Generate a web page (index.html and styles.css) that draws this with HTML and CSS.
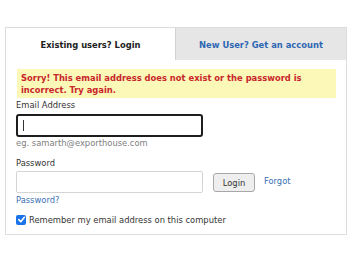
FILE: index.html
```html
<!DOCTYPE html>
<html lang="en">
<head>
<meta charset="UTF-8">
<meta name="viewport" content="width=device-width, initial-scale=1.0">
<title>Login</title>
<link rel="stylesheet" href="styles.css">
</head>
<body>

<div class="login-card">
  <div class="tabs">
    <div class="tab active">Existing users? Login</div>
    <div class="tab inactive">New User? Get an account</div>
  </div>

  <div class="login-body">
    <div class="error-box">Sorry! This email address does not exist or the password is incorrect. Try again.</div>

    <label class="field-label">Email Address</label>
    <div class="email-input"><span class="caret"></span></div>
    <div class="hint">eg. samarth@exporthouse.com</div>

    <label class="field-label pw-label">Password</label>
    <div class="pw-row">
      <div class="pw-input"></div>
      <button class="login-btn">Login</button>
      <a href="#" class="link forgot">Forgot</a>
    </div>
    <a href="#" class="link pw-link">Password?</a>

    <div class="remember">
      <span class="checkbox">
        <svg width="9" height="9" viewBox="0 0 10 10"><path d="M2 5.2 L4.2 7.4 L8.2 2.6" fill="none" stroke="#fff" stroke-width="1.8" stroke-linecap="round" stroke-linejoin="round"/></svg>
      </span>
      Remember my email address on this computer
    </div>
  </div>
</div>

</body>
</html>
```

FILE: styles.css
```css
/* Login box */
body {
  margin: 0;
  background: #fff;
  font-family: "DejaVu Sans", Verdana, sans-serif;
  font-stretch: condensed;
  font-size: 9.3px;
  color: #333;
}

.login-card {
  margin: 27px 0 0 5px;
  width: 340px;
  height: 206px;
  border: 1px solid #dcdcdc;
}

.tabs {
  display: flex;
  height: 32px;
}

.tab {
  display: flex;
  align-items: center;
  justify-content: center;
  font-weight: bold;
}

.tab.active {
  width: 169px;
  color: #222;
}

.tab.inactive {
  flex: 1;
  background: #e6e6e6;
  border-left: 1px solid #d2d2d2;
  color: #2f66b3;
}

.login-body {
  padding: 9px 10px 0 10px;
}

.error-box {
  background: #fbf8b8;
  color: #c8262b;
  font-weight: bold;
  line-height: 11.5px;
  padding: 3px 4px;
  margin-left: 1px;
}

.field-label {
  display: block;
  color: #333;
  margin-top: 0;
  line-height: 13px;
}

.email-input {
  margin-top: 3px;
  width: 183px;
  height: 19px;
  border: 2px solid #1e1e1e;
  border-radius: 3px;
  display: flex;
  align-items: center;
}

.caret {
  display: block;
  width: 1px;
  height: 11px;
  background: #333;
  margin-left: 5px;
}

.hint {
  color: #808080;
  margin-top: 0;
  line-height: 11px;
}

.pw-label {
  margin-top: 8px;
}

.pw-row {
  display: flex;
  align-items: center;
  margin-top: 2px;
}

.pw-input {
  width: 185px;
  height: 20px;
  border: 1px solid #d4d4d4;
  border-radius: 2px;
}

.login-btn {
  margin-left: 10px;
  width: 42px;
  height: 19px;
  padding: 0;
  font-family: inherit;
  font-stretch: condensed;
  font-size: 9.3px;
  color: #333;
  background: #eeeeee;
  border: 1px solid #a8a8a8;
  border-radius: 3px;
}

.link {
  color: #3a6fb4;
  text-decoration: none;
}

.forgot {
  margin-left: 9px;
  margin-bottom: 3px;
}

.pw-link {
  display: block;
  margin-top: 0;
  line-height: 13px;
}

.remember {
  display: flex;
  align-items: center;
  margin-top: 8px;
  color: #333;
}

.checkbox {
  display: flex;
  align-items: center;
  justify-content: center;
  width: 10px;
  height: 10px;
  background: #1a73e8;
  border-radius: 2px;
  margin-right: 3px;
}
```
